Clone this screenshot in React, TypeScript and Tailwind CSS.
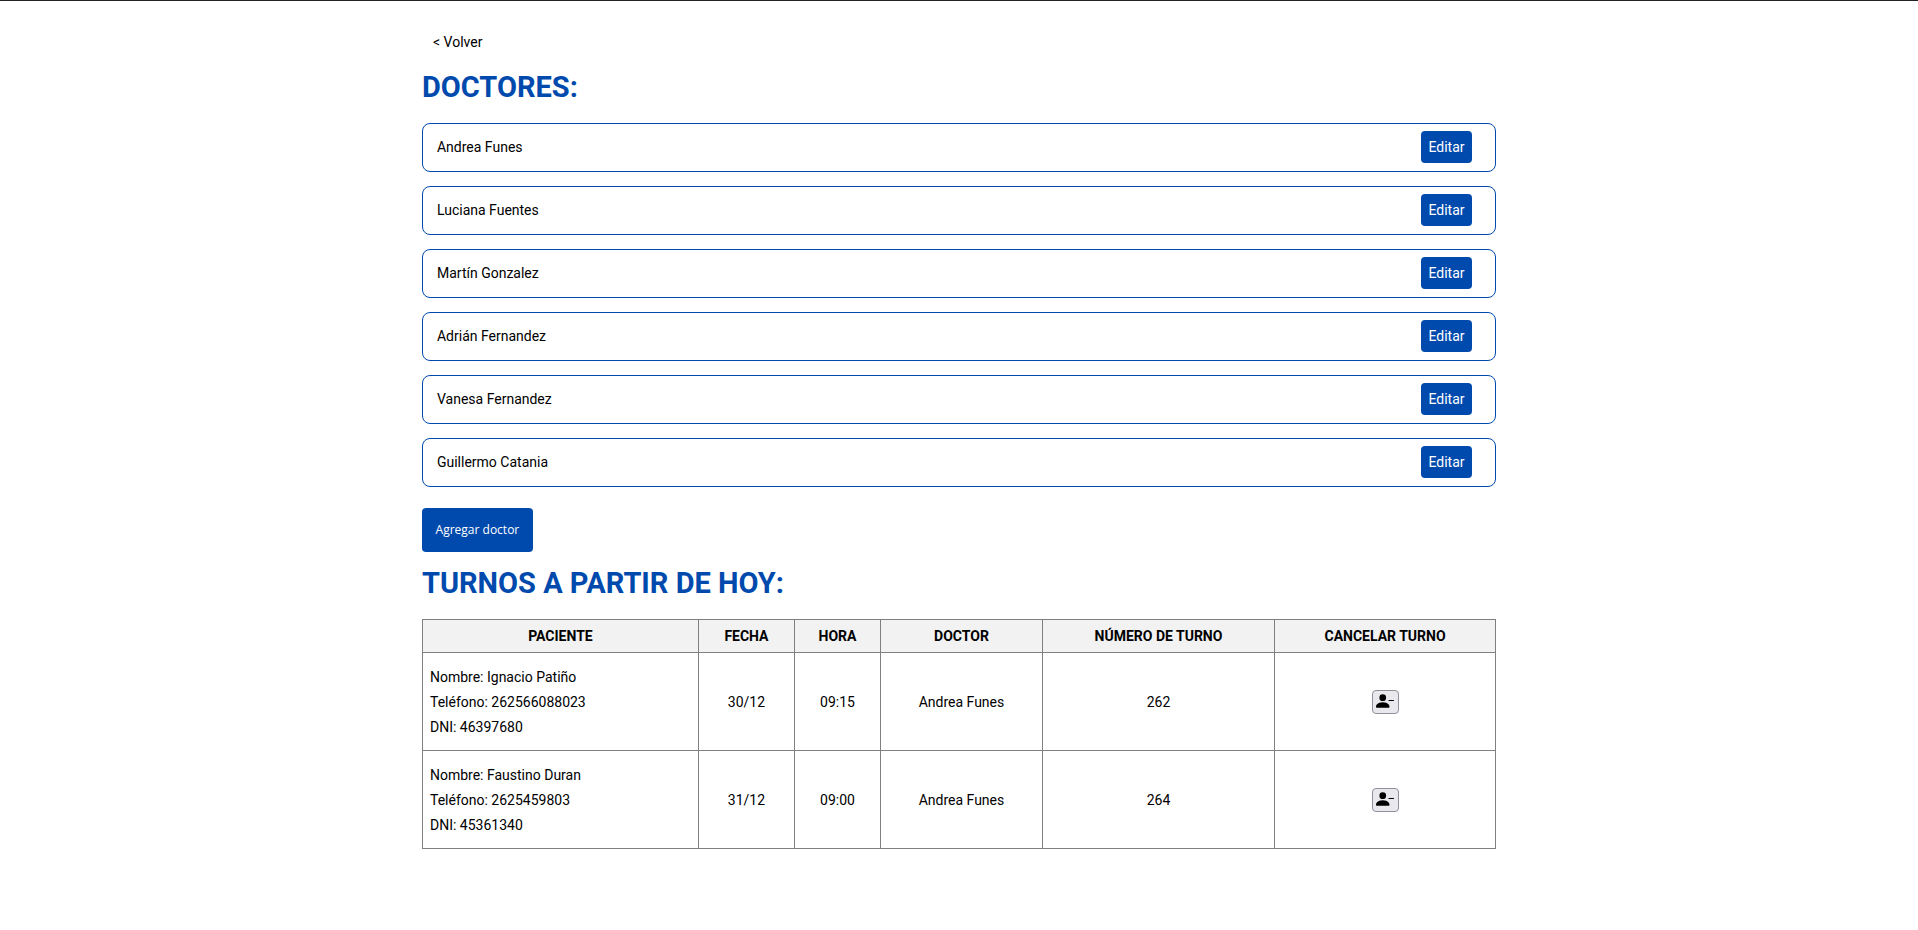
const doctors = [
  "Andrea Funes",
  "Luciana Fuentes",
  "Martín Gonzalez",
  "Adrián Fernandez",
  "Vanesa Fernandez",
  "Guillermo Catania",
];

const appointments = [
  { name: "Ignacio Patiño", phone: "262566088023", dni: "46397680", date: "30/12", time: "09:15", doctor: "Andrea Funes", number: 262 },
  { name: "Faustino Duran", phone: "2625459803", dni: "45361340", date: "31/12", time: "09:00", doctor: "Andrea Funes", number: 264 },
];

const columns = [
  { label: "PACIENTE", width: "w-[276px]" },
  { label: "FECHA", width: "w-[96px]" },
  { label: "HORA", width: "w-[86px]" },
  { label: "DOCTOR", width: "w-[162px]" },
  { label: "NÚMERO DE TURNO", width: "w-[232px]" },
  { label: "CANCELAR TURNO", width: "w-[221px]" },
];

const headCell = "border border-[#808080] px-[7px] text-center font-bold";
const bodyCell = "border border-[#808080] px-[7px] pt-px text-center";

function PersonDashIcon() {
  return (
    <svg viewBox="0 0 16 16" fill="currentColor" aria-hidden="true" className="size-[18px]">
      <path
        fillRule="evenodd"
        d="M11 7.5a.5.5 0 0 1 .5-.5h4a.5.5 0 0 1 0 1h-4a.5.5 0 0 1-.5-.5z"
      />
      <path d="M1 14s-1 0-1-1 1-4 6-4 6 3 6 4-1 1-1 1H1zm5-6a3 3 0 1 0 0-6 3 3 0 0 0 0 6z" />
    </svg>
  );
}

export default function App() {
  return (
    <div className="border-t border-[#222] bg-white font-['Roboto',sans-serif] text-sm leading-[25px] text-black">
      <main className="mx-auto w-[56%] pt-[29px] pb-20">
        <a href="#volver" className="ml-[11px] block w-fit">
          {"< Volver"}
        </a>

        <h1 className="mt-[14px] text-[29px] leading-9 font-bold text-[#004aad]">DOCTORES:</h1>
        <ul className="mt-[18px] flex flex-col gap-[14px]">
          {doctors.map((doctor) => (
            <li
              key={doctor}
              className="flex items-center justify-between rounded-lg border border-[#004aad] pt-[7px] pr-[23px] pb-2 pl-[14px]"
            >
              <span>{doctor}</span>
              <button type="button" className="h-8 w-[51px] rounded-[4px] bg-[#004aad] text-white">
                Editar
              </button>
            </li>
          ))}
        </ul>
        <button
          type="button"
          className="mt-[21px] block h-11 w-[111px] rounded-[4px] bg-[#004aad] font-['Open_Sans',sans-serif] text-xs text-white"
        >
          Agregar doctor
        </button>

        <h2 className="mt-[13px] text-[29px] leading-9 font-bold text-[#004aad]">TURNOS A PARTIR DE HOY:</h2>
        <table className="mt-[18px] w-full table-fixed border-collapse">
          <thead>
            <tr className="h-[33px] bg-[#f2f2f2]">
              {columns.map((column) => (
                <th key={column.label} scope="col" className={`${headCell} ${column.width}`}>
                  {column.label}
                </th>
              ))}
            </tr>
          </thead>
          <tbody>
            {appointments.map((item) => (
              <tr key={item.number} className="h-[98px]">
                <td className="border border-[#808080] px-[7px] pt-px text-left">
                  <p>Nombre: {item.name}</p>
                  <p>Teléfono: {item.phone}</p>
                  <p>DNI: {item.dni}</p>
                </td>
                <td className={bodyCell}>{item.date}</td>
                <td className={bodyCell}>{item.time}</td>
                <td className={bodyCell}>{item.doctor}</td>
                <td className={bodyCell}>{item.number}</td>
                <td className="border border-[#808080] px-[7px]">
                  <button
                    type="button"
                    aria-label={`Cancelar turno ${item.number}`}
                    className="mx-auto flex h-6 w-[27px] rounded-[4px] border border-[#8f8f9d] bg-[#e9e9ed] pt-px pl-[3px]"
                  >
                    <PersonDashIcon />
                  </button>
                </td>
              </tr>
            ))}
          </tbody>
        </table>
      </main>
    </div>
  );
}
